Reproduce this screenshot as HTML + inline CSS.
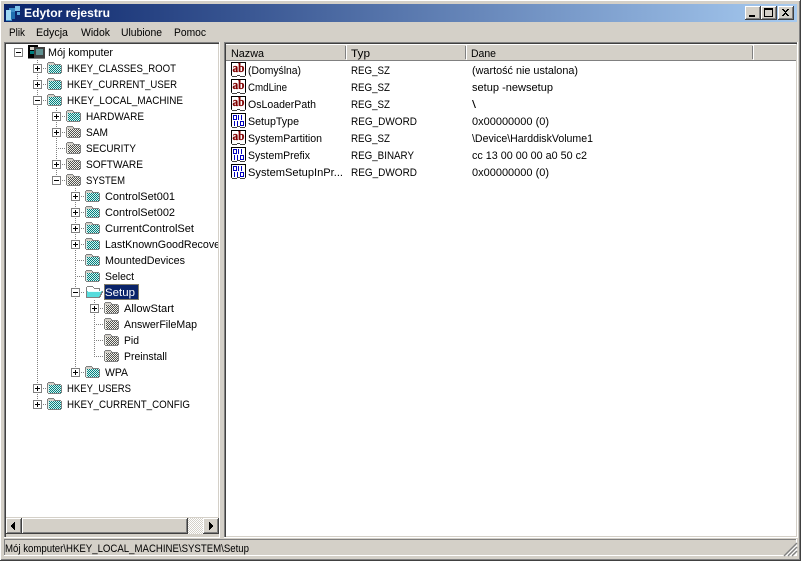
<!DOCTYPE html>
<html><head><meta charset="utf-8"><title>Edytor rejestru</title>
<style>
html,body{margin:0;padding:0;width:801px;height:561px;overflow:hidden;background:#d4d0c8}
svg{display:block}
text{font-family:"Liberation Sans",sans-serif;font-size:11px;fill:#000}
.r{shape-rendering:crispEdges}
.ab{font-family:"Liberation Serif",serif;font-weight:bold;font-size:13px;fill:#800000;stroke:#800000;stroke-width:.3}
</style></head><body>
<svg width="801" height="561" viewBox="0 0 801 561" xmlns="http://www.w3.org/2000/svg">
<defs>
<linearGradient id="tg" x1="0" x2="1" y1="0" y2="0"><stop offset="0" stop-color="#0a246a"/><stop offset="1" stop-color="#a6caf0"/></linearGradient>
<pattern id="ds" width="2" height="2" patternUnits="userSpaceOnUse"><rect width="2" height="2" fill="#ffffff"/><rect width="1" height="1" fill="#d4d0c8"/><rect x="1" y="1" width="1" height="1" fill="#d4d0c8"/></pattern>
<path id="ck" class="r" d="M2 3h1v1H2zM4 3h1v1H4zM6 3h1v1H6zM8 3h1v1H8zM10 3h1v1h-1zM12 3h1v1h-1zM3 4h1v1H3zM5 4h1v1H5zM7 4h1v1H7zM9 4h1v1H9zM11 4h1v1h-1zM13 4h1v1h-1zM2 5h1v1H2zM4 5h1v1H4zM6 5h1v1H6zM8 5h1v1H8zM10 5h1v1h-1zM12 5h1v1h-1zM3 6h1v1H3zM5 6h1v1H5zM7 6h1v1H7zM9 6h1v1H9zM11 6h1v1h-1zM13 6h1v1h-1zM2 7h1v1H2zM4 7h1v1H4zM6 7h1v1H6zM8 7h1v1H8zM10 7h1v1h-1zM12 7h1v1h-1zM3 8h1v1H3zM5 8h1v1H5zM7 8h1v1H7zM9 8h1v1H9zM11 8h1v1h-1zM13 8h1v1h-1zM2 9h1v1H2zM4 9h1v1H4zM6 9h1v1H6zM8 9h1v1H8zM10 9h1v1h-1zM12 9h1v1h-1zM3 10h1v1H3zM5 10h1v1H5zM7 10h1v1H7zM9 10h1v1H9zM11 10h1v1h-1zM13 10h1v1h-1z"/>
<symbol id="f" width="16" height="12" overflow="visible"><path class="r" d="M1 0h6v1h1v1h6v1h1v8h-1v1H1v-1H0V1h1z" fill="#808080"/><rect class="r" x="1" y="1" width="6" height="2" fill="#d4d0c8"/><rect class="r" x="1" y="3" width="13" height="8" fill="#d8f0ec"/><use href="#ck" fill="#008080"/></symbol>
<symbol id="g" width="16" height="12" overflow="visible"><path class="r" d="M1 0h6v1h1v1h6v1h1v8h-1v1H1v-1H0V1h1z" fill="#808080"/><rect class="r" x="1" y="1" width="6" height="2" fill="#d4d0c8"/><rect class="r" x="1" y="3" width="13" height="8" fill="#f0f0e8"/><use href="#ck" fill="#505050"/></symbol>
<symbol id="p" width="9" height="9"><rect class="r" x=".5" y=".5" width="8" height="8" fill="#fff" stroke="#808080"/><rect class="r" x="2" y="4" width="5" height="1" fill="#000"/><rect class="r" x="4" y="2" width="1" height="5" fill="#000"/></symbol>
<symbol id="m" width="9" height="9"><rect class="r" x=".5" y=".5" width="8" height="8" fill="#fff" stroke="#808080"/><rect class="r" x="2" y="4" width="5" height="1" fill="#000"/></symbol>
<symbol id="pg" width="16" height="16" class="r"><rect x="0" y="0" width="15" height="13" fill="#000"/><rect x="1" y="1" width="13" height="12" fill="#fff"/><path d="M0 13h1v1h5v-1h3v1h5v-1h1v1h-1v1H9v-1H6v1H1v-1H0z" fill="#404040"/></symbol>
<symbol id="bn" width="16" height="16"><use href="#pg" width="16" height="16"/><path class="r" fill="#0000c0" d="M2 2h4v5H2zM3 3v3h2V3zM7 2h1v5H7zM10 2h1v5h-1zM3 8h1v5H3zM6 8h1v5H6zM9 8h4v5H9zM10 9v3h2V9z" fill-rule="evenodd"/></symbol>
<clipPath id="tc"><rect x="6" y="44" width="212" height="473"/></clipPath>
</defs>

<!-- window frame -->
<g class="r">
<rect width="801" height="561" fill="#404040"/>
<rect width="800" height="560" fill="#fff"/>
<rect x="1" y="1" width="799" height="559" fill="#808080"/>
<rect x="1" y="1" width="798" height="558" fill="#d4d0c8"/>
<rect x="4" y="4" width="793" height="18" fill="url(#tg)"/>
</g>
<!-- app icon -->
<g class="r">
<path d="M6 10h3V8h6v11h-3v2H6z" fill="#3d8fc9"/><path d="M6 10h5v10H6z" fill="#a0d8f4"/><path d="M11 12h4v7h-4z" fill="#1f6fb0"/>
<rect x="15" y="6" width="5" height="5" fill="#7ec2ea"/><rect x="17" y="12" width="3" height="3" fill="#5aa8dc"/>
</g>
<text x="24" y="17" textLength="86" lengthAdjust="spacingAndGlyphs" style="font-weight:bold;fill:#fff;font-size:12px">Edytor rejestru</text>
<!-- window buttons -->
<g class="r">
<rect x="745" y="6" width="16" height="14" fill="#404040"/><rect x="745" y="6" width="15" height="13" fill="#fff"/><rect x="746" y="7" width="14" height="12" fill="#808080"/><rect x="746" y="7" width="13" height="11" fill="#d4d0c8"/>
<rect x="749" y="15" width="6" height="2" fill="#000"/>
<rect x="761" y="6" width="16" height="14" fill="#404040"/><rect x="761" y="6" width="15" height="13" fill="#fff"/><rect x="762" y="7" width="14" height="12" fill="#808080"/><rect x="762" y="7" width="13" height="11" fill="#d4d0c8"/>
<path d="M764 8h9v9h-9zM765 10v6h7v-6z" fill="#000" fill-rule="evenodd"/>
<rect x="778" y="6" width="16" height="14" fill="#404040"/><rect x="778" y="6" width="15" height="13" fill="#fff"/><rect x="779" y="7" width="14" height="12" fill="#808080"/><rect x="779" y="7" width="13" height="11" fill="#d4d0c8"/>
<path d="M782 9h2v1h1v1h1v-1h1v-1h2v1h-1v1h-1v1h-1v1h1v1h1v1h1v1h-2v-1h-1v-1h-1v1h-1v1h-2v-1h1v-1h1v-1h1v-1h-1v-1h-1v-1h-1z" fill="#000"/>
</g>
<!-- menu -->
<g>
<text x="9" y="36" textLength="16" lengthAdjust="spacingAndGlyphs">Plik</text>
<text x="36" y="36" textLength="32" lengthAdjust="spacingAndGlyphs">Edycja</text>
<text x="81" y="36" textLength="29" lengthAdjust="spacingAndGlyphs">Widok</text>
<text x="121" y="36" textLength="41" lengthAdjust="spacingAndGlyphs">Ulubione</text>
<text x="174" y="36" textLength="32" lengthAdjust="spacingAndGlyphs">Pomoc</text>
</g>

<!-- tree pane -->
<g class="r">
<rect x="4" y="42" width="216" height="496" fill="#fff"/>
<rect x="4" y="42" width="215" height="495" fill="#808080"/>
<rect x="5" y="43" width="214" height="494" fill="#404040"/>
<rect x="6" y="44" width="213" height="493" fill="#d4d0c8"/>
<rect x="6" y="44" width="212" height="473" fill="#fff"/>
</g>
<g clip-path="url(#tc)">
<!-- dotted lines -->
<g stroke="#808080" stroke-width="1" stroke-dasharray="1 1" fill="none" class="r">
<path d="M37.5 60V404M37 68.5h10M37 84.5h10M37 100.5h10M37 388.5h10M37 404.5h10"/>
<path d="M56.5 108V180M56 116.5h10M56 132.5h10M56 148.5h10M56 164.5h10M56 180.5h10"/>
<path d="M75.5 188V372M75 196.5h10M75 212.5h10M75 228.5h10M75 244.5h10M75 260.5h10M75 276.5h10M75 292.5h10M75 372.5h10"/>
<path d="M94.5 300V356M94 308.5h10M94 324.5h10M94 340.5h10M94 356.5h10"/>
</g>
<!-- expanders -->
<use href="#m" x="14" y="48" width="9" height="9"/>
<use href="#p" x="33" y="64" width="9" height="9"/>
<use href="#p" x="33" y="80" width="9" height="9"/>
<use href="#m" x="33" y="96" width="9" height="9"/>
<use href="#p" x="33" y="384" width="9" height="9"/>
<use href="#p" x="33" y="400" width="9" height="9"/>
<use href="#p" x="52" y="112" width="9" height="9"/>
<use href="#p" x="52" y="128" width="9" height="9"/>
<use href="#p" x="52" y="160" width="9" height="9"/>
<use href="#m" x="52" y="176" width="9" height="9"/>
<use href="#p" x="71" y="192" width="9" height="9"/>
<use href="#p" x="71" y="208" width="9" height="9"/>
<use href="#p" x="71" y="224" width="9" height="9"/>
<use href="#p" x="71" y="240" width="9" height="9"/>
<use href="#m" x="71" y="288" width="9" height="9"/>
<use href="#p" x="71" y="368" width="9" height="9"/>
<use href="#p" x="90" y="304" width="9" height="9"/>
<!-- computer icon -->
<g class="r">
<rect x="28" y="45" width="10" height="13" fill="#000"/>
<rect x="30" y="47" width="5" height="3" fill="#d4d0c8"/>
<rect x="30" y="51" width="5" height="3" fill="#008080"/>
<rect x="34" y="47" width="11" height="11" fill="#404040"/>
<rect x="36" y="49" width="7" height="6" fill="#5f9090"/>
<rect x="28" y="58" width="17" height="1" fill="#808080"/>
</g>
<text x="48" y="56" textLength="65" lengthAdjust="spacingAndGlyphs">Mój komputer</text>
<!-- folders -->
<use href="#f" x="47" y="62" width="16" height="12"/>
<use href="#f" x="47" y="78" width="16" height="12"/>
<use href="#f" x="47" y="94" width="16" height="12"/>
<use href="#f" x="66" y="110" width="16" height="12"/>
<use href="#g" x="66" y="126" width="16" height="12"/>
<use href="#g" x="66" y="142" width="16" height="12"/>
<use href="#g" x="66" y="158" width="16" height="12"/>
<use href="#g" x="66" y="174" width="16" height="12"/>
<use href="#f" x="85" y="190" width="16" height="12"/>
<use href="#f" x="85" y="206" width="16" height="12"/>
<use href="#f" x="85" y="222" width="16" height="12"/>
<use href="#f" x="85" y="238" width="16" height="12"/>
<use href="#f" x="85" y="254" width="16" height="12"/>
<use href="#f" x="85" y="270" width="16" height="12"/>
<use href="#f" x="85" y="366" width="16" height="12"/>
<use href="#g" x="104" y="302" width="16" height="12"/>
<use href="#g" x="104" y="318" width="16" height="12"/>
<use href="#g" x="104" y="334" width="16" height="12"/>
<use href="#g" x="104" y="350" width="16" height="12"/>
<use href="#f" x="47" y="382" width="16" height="12"/>
<use href="#f" x="47" y="398" width="16" height="12"/>
<!-- open folder -->
<path class="r" d="M87 286h6v1h1v1h6v3h3v2h-1v2h-1v2h-1v1H86v-11h1z" fill="#808080"/>
<path class="r" d="M87 287h6v1h1v1h5v2H87z" fill="#fff"/>
<path class="r" d="M87 291h15v1h-1v2h-1v2h-1v1H87z" fill="#57dcdc"/>
<path class="r" d="M88 291h13v1H88z" fill="#e8ffff"/>
<!-- labels -->
<g>
<text x="67" y="72" textLength="109" lengthAdjust="spacingAndGlyphs">HKEY_CLASSES_ROOT</text>
<text x="67" y="88" textLength="110" lengthAdjust="spacingAndGlyphs">HKEY_CURRENT_USER</text>
<text x="67" y="104" textLength="116" lengthAdjust="spacingAndGlyphs">HKEY_LOCAL_MACHINE</text>
<text x="86" y="120" textLength="58" lengthAdjust="spacingAndGlyphs">HARDWARE</text>
<text x="86" y="136" textLength="22" lengthAdjust="spacingAndGlyphs">SAM</text>
<text x="86" y="152" textLength="50" lengthAdjust="spacingAndGlyphs">SECURITY</text>
<text x="86" y="168" textLength="57" lengthAdjust="spacingAndGlyphs">SOFTWARE</text>
<text x="86" y="184" textLength="39" lengthAdjust="spacingAndGlyphs">SYSTEM</text>
<text x="105" y="200" textLength="70" lengthAdjust="spacingAndGlyphs">ControlSet001</text>
<text x="105" y="216" textLength="70" lengthAdjust="spacingAndGlyphs">ControlSet002</text>
<text x="105" y="232" textLength="89" lengthAdjust="spacingAndGlyphs">CurrentControlSet</text>
<text x="105" y="248" textLength="124" lengthAdjust="spacingAndGlyphs">LastKnownGoodRecovery</text>
<text x="105" y="264" textLength="80" lengthAdjust="spacingAndGlyphs">MountedDevices</text>
<text x="105" y="280" textLength="29" lengthAdjust="spacingAndGlyphs">Select</text>
<rect class="r" x="104" y="284" width="35" height="16" fill="#0a246a"/>
<rect class="r" x="104.5" y="284.5" width="34" height="15" fill="none" stroke="#f5d36b" stroke-dasharray="1 1"/>
<text x="105" y="296" textLength="30" lengthAdjust="spacingAndGlyphs" style="fill:#fff">Setup</text>
<text x="124" y="312" textLength="50" lengthAdjust="spacingAndGlyphs">AllowStart</text>
<text x="124" y="328" textLength="73" lengthAdjust="spacingAndGlyphs">AnswerFileMap</text>
<text x="124" y="344" textLength="15" lengthAdjust="spacingAndGlyphs">Pid</text>
<text x="124" y="360" textLength="43" lengthAdjust="spacingAndGlyphs">Preinstall</text>
<text x="105" y="376" textLength="23" lengthAdjust="spacingAndGlyphs">WPA</text>
<text x="67" y="392" textLength="64" lengthAdjust="spacingAndGlyphs">HKEY_USERS</text>
<text x="67" y="408" textLength="123" lengthAdjust="spacingAndGlyphs">HKEY_CURRENT_CONFIG</text>
</g>
</g>
<!-- horizontal scrollbar -->
<g class="r">
<rect x="6" y="518" width="212" height="16" fill="url(#ds)"/>
<rect x="6" y="518" width="16" height="16" fill="#404040"/><rect x="6" y="518" width="15" height="15" fill="#fff"/><rect x="7" y="519" width="14" height="14" fill="#808080"/><rect x="7" y="519" width="13" height="13" fill="#d4d0c8"/>
<path d="M15 522v8h-1v-1h-1v-1h-1v-1h-1v-2h1v-1h1v-1h1v-1z" fill="#000"/>
<rect x="22" y="518" width="166" height="16" fill="#404040"/><rect x="22" y="518" width="165" height="15" fill="#fff"/><rect x="23" y="519" width="164" height="14" fill="#808080"/><rect x="23" y="519" width="163" height="13" fill="#d4d0c8"/>
<rect x="203" y="518" width="16" height="16" fill="#404040"/><rect x="203" y="518" width="15" height="15" fill="#fff"/><rect x="204" y="519" width="14" height="14" fill="#808080"/><rect x="204" y="519" width="13" height="13" fill="#d4d0c8"/>
<path d="M209 522v8h1v-1h1v-1h1v-1h1v-2h-1v-1h-1v-1h-1v-1z" fill="#000"/>
</g>

<!-- list pane -->
<g class="r">
<rect x="224" y="42" width="574" height="496" fill="#fff"/>
<rect x="224" y="42" width="573" height="495" fill="#808080"/>
<rect x="225" y="43" width="572" height="494" fill="#404040"/>
<rect x="226" y="44" width="571" height="492" fill="#fff"/>
<rect x="796" y="44" width="1" height="493" fill="#d4d0c8"/>
<rect x="226" y="536" width="571" height="1" fill="#d4d0c8"/>
<!-- header -->
<rect x="226" y="44" width="570" height="17" fill="#d4d0c8"/>
<rect x="226" y="60" width="570" height="1" fill="#808080"/>
<rect x="226" y="44" width="570" height="1" fill="#fff"/>
<rect x="345" y="46" width="1" height="13" fill="#808080"/><rect x="346" y="45" width="1" height="15" fill="#fff"/>
<rect x="465" y="46" width="1" height="13" fill="#808080"/><rect x="466" y="45" width="1" height="15" fill="#fff"/>
<rect x="752" y="46" width="1" height="13" fill="#808080"/><rect x="753" y="45" width="1" height="15" fill="#fff"/>
</g>
<text x="231" y="57" textLength="33" lengthAdjust="spacingAndGlyphs">Nazwa</text>
<text x="351" y="57" textLength="19" lengthAdjust="spacingAndGlyphs">Typ</text>
<text x="471" y="57" textLength="25" lengthAdjust="spacingAndGlyphs">Dane</text>
<!-- list icons -->
<use href="#pg" x="231" y="62" width="16" height="16"/><text x="232.5" y="72" class="ab" textLength="12" lengthAdjust="spacingAndGlyphs">ab</text>
<use href="#pg" x="231" y="79" width="16" height="16"/><text x="232.5" y="89" class="ab" textLength="12" lengthAdjust="spacingAndGlyphs">ab</text>
<use href="#pg" x="231" y="96" width="16" height="16"/><text x="232.5" y="106" class="ab" textLength="12" lengthAdjust="spacingAndGlyphs">ab</text>
<use href="#bn" x="231" y="113" width="16" height="16"/>
<use href="#pg" x="231" y="130" width="16" height="16"/><text x="232.5" y="140" class="ab" textLength="12" lengthAdjust="spacingAndGlyphs">ab</text>
<use href="#bn" x="231" y="147" width="16" height="16"/>
<use href="#bn" x="231" y="164" width="16" height="16"/>
<!-- list text -->
<g>
<text x="248" y="74" textLength="53" lengthAdjust="spacingAndGlyphs">(Domyślna)</text>
<text x="248" y="91" textLength="39" lengthAdjust="spacingAndGlyphs">CmdLine</text>
<text x="248" y="108" textLength="68" lengthAdjust="spacingAndGlyphs">OsLoaderPath</text>
<text x="248" y="125" textLength="51" lengthAdjust="spacingAndGlyphs">SetupType</text>
<text x="248" y="142" textLength="74" lengthAdjust="spacingAndGlyphs">SystemPartition</text>
<text x="248" y="159" textLength="62" lengthAdjust="spacingAndGlyphs">SystemPrefix</text>
<text x="248" y="176" textLength="95" lengthAdjust="spacingAndGlyphs">SystemSetupInPr...</text>
<text x="351" y="74" textLength="39" lengthAdjust="spacingAndGlyphs">REG_SZ</text>
<text x="351" y="91" textLength="39" lengthAdjust="spacingAndGlyphs">REG_SZ</text>
<text x="351" y="108" textLength="39" lengthAdjust="spacingAndGlyphs">REG_SZ</text>
<text x="351" y="125" textLength="66" lengthAdjust="spacingAndGlyphs">REG_DWORD</text>
<text x="351" y="142" textLength="39" lengthAdjust="spacingAndGlyphs">REG_SZ</text>
<text x="351" y="159" textLength="63" lengthAdjust="spacingAndGlyphs">REG_BINARY</text>
<text x="351" y="176" textLength="66" lengthAdjust="spacingAndGlyphs">REG_DWORD</text>
<text x="472" y="74" textLength="106" lengthAdjust="spacingAndGlyphs">(wartość nie ustalona)</text>
<text x="472" y="91" textLength="81" lengthAdjust="spacingAndGlyphs">setup -newsetup</text>
<text x="472" y="108" textLength="4" lengthAdjust="spacingAndGlyphs">\</text>
<text x="472" y="125" textLength="77" lengthAdjust="spacingAndGlyphs">0x00000000 (0)</text>
<text x="472" y="142" textLength="121" lengthAdjust="spacingAndGlyphs">\Device\HarddiskVolume1</text>
<text x="472" y="159" textLength="115" lengthAdjust="spacingAndGlyphs">cc 13 00 00 00 a0 50 c2</text>
<text x="472" y="176" textLength="77" lengthAdjust="spacingAndGlyphs">0x00000000 (0)</text>
</g>

<!-- status bar -->
<g class="r">
<rect x="4" y="539" width="793" height="1" fill="#808080"/>
<rect x="4" y="539" width="1" height="17" fill="#808080"/>
<rect x="4" y="555" width="793" height="1" fill="#fff"/>
<rect x="796" y="539" width="1" height="17" fill="#fff"/>
</g>
<path d="M784 556L797 543M788 556L797 547M792 556L797 551" stroke="#808080" stroke-width="1.4" fill="none"/>
<path d="M786 556L797 545M790 556L797 549M794 556L797 553" stroke="#fff" stroke-width="1" fill="none"/>
<text x="5" y="552" textLength="244" lengthAdjust="spacingAndGlyphs">Mój komputer\HKEY_LOCAL_MACHINE\SYSTEM\Setup</text>
</svg>
</body></html>
